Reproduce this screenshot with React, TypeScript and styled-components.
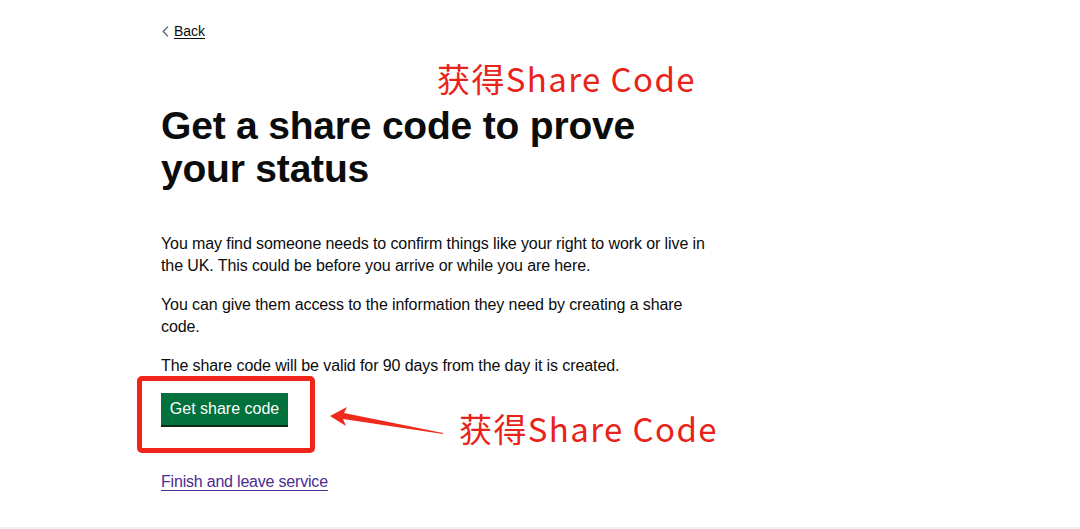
import React from "react";
import styled, { createGlobalStyle } from "styled-components";

const Global = createGlobalStyle`
  html, body { margin: 0; padding: 0; background: #ffffff; }
  body { font-family: "Liberation Sans", Arial, sans-serif; color: #0b0c0c; }
  #root { min-height: 529px; }
`;

const Page = styled.div`
  position: relative;
  width: 1080px;
  height: 529px;
  box-sizing: border-box;
  border-bottom: 2px solid #eef0f3;
  overflow: hidden;
`;

const Main = styled.main`
  padding: 22px 0 0 161px;
  display: flex;
  flex-direction: column;
  align-items: flex-start;
`;

const BackLink = styled.a`
  display: inline-flex;
  align-items: center;
  gap: 5px;
  font-size: 14px;
  color: #0b0c0c;
  text-decoration: underline;
  text-underline-offset: 2px;
  margin-left: 1px;
  line-height: 18px;
`;

const Heading = styled.h1`
  margin: 64px 0 0 0;
  font-size: 39px;
  line-height: 43px;
  font-weight: 700;
  letter-spacing: -0.2px;
  width: 520px;
`;

const Para = styled.p<{ $top?: number }>`
  margin: ${(p) => p.$top ?? 17}px 0 0 0;
  font-size: 16px;
  line-height: 22px;
  letter-spacing: -0.1px;
  white-space: nowrap;
`;

const Button = styled.button`
  margin-top: 16px;
  background: #00703c;
  color: #ffffff;
  border: none;
  border-radius: 0;
  box-shadow: 0 2px 0 #002d18;
  font-family: inherit;
  font-size: 16px;
  height: 32px;
  width: 127px;
  padding: 0;
  white-space: nowrap;
  text-align: center;
`;

const FinishLink = styled.a`
  margin-top: 46px;
  font-size: 16px;
  line-height: 22px;
  letter-spacing: -0.2px;
  color: #4c2c92;
  text-decoration: underline;
  text-underline-offset: 3px;
`;

const Note = styled.div<{ $x: number; $y: number }>`
  position: absolute;
  left: ${(p) => p.$x}px;
  top: ${(p) => p.$y}px;
  color: #e8231a;
  font-family: "Noto Sans CJK SC", "Noto Sans", sans-serif;
  font-size: 33px;
  letter-spacing: 1.4px;
  line-height: 40px;
  white-space: nowrap;
`;

const RedBox = styled.div`
  position: absolute;
  left: 137px;
  top: 376px;
  width: 178px;
  height: 77px;
  box-sizing: border-box;
  border: 5px solid #f02418;
  border-radius: 5px;
`;

const Arrow = styled.svg`
  position: absolute;
  left: 325px;
  top: 400px;
`;

export default function App() {
  return (
    <>
      <Global />
      <Page>
        <Main>
          <BackLink href="#">
            <svg width="7" height="11" viewBox="0 0 7 11">
              <path d="M6 0.7 L1.2 5.5 L6 10.3" fill="none" stroke="#505a5f" strokeWidth="1.2" />
            </svg>
            Back
          </BackLink>
          <Heading>Get a share code to prove your status</Heading>
          <Para $top={43}>
            You may find someone needs to confirm things like your right to work or live in
            <br />
            the UK. This could be before you arrive or while you are here.
          </Para>
          <Para>
            You can give them access to the information they need by creating a share
            <br />
            code.
          </Para>
          <Para>The share code will be valid for 90 days from the day it is created.</Para>
          <Button>Get share code</Button>
          <FinishLink href="#">Finish and leave service</FinishLink>
        </Main>
        <Note $x={437} $y={58}>获得Share Code</Note>
        <Note $x={459} $y={408}>获得Share Code</Note>
        <RedBox />
        <Arrow width="125" height="40" viewBox="0 0 125 40">
          <polygon points="5,16 22,7 19,13 118,33 118,34 18,19 21,26" fill="#ef2a1c" />
        </Arrow>
      </Page>
    </>
  );
}
